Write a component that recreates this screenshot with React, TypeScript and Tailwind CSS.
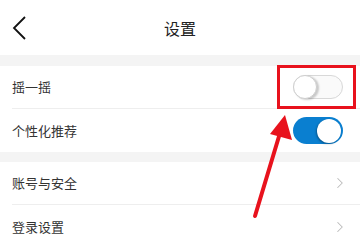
import { ChevronRight } from 'lucide-react';

const font = { fontFamily: '"Noto Sans CJK SC", "Noto Sans", sans-serif' };

function Toggle({ on }: { on: boolean }) {
  if (on) {
    return (
      <div className="relative w-[50px] h-[27px] rounded-full bg-[#0a7fd0] flex items-center justify-end pr-[2px]">
        <div className="w-[24px] h-[24px] rounded-full bg-white shadow-[-1px_1px_2px_rgba(0,0,0,0.3)]" />
      </div>
    );
  }
  return (
    <div className="relative w-[50px] h-[24px] rounded-full border border-[#d8d8d8] bg-[#fafafa] flex items-center">
      <div className="w-[24px] h-[24px] -ml-px rounded-full bg-white border border-[#cfcfcf] shadow-[2px_1px_2px_rgba(0,0,0,0.2)]" />
    </div>
  );
}

function Row({ label, right, divider }: { label: string; right: React.ReactNode; divider?: boolean }) {
  return (
    <div className="bg-white pl-3">
      <div className={`h-[43px] flex items-center justify-between pr-[17px] ${divider ? 'border-b border-[#eeeeee]' : ''}`}>
        <span className="text-[13px] text-[#333]">{label}</span>
        {right}
      </div>
    </div>
  );
}

export default function App() {
  return (
    <div className="relative w-[360px] h-[240px] overflow-hidden bg-[#f4f4f4]" style={font}>
      <div className="h-[55px] bg-white flex items-center relative">
        {/* back */}
        <svg className="ml-[12px]" width="16" height="26" viewBox="0 0 16 26">
          <polyline points="13,2 2,13 13,24" fill="none" stroke="#111" strokeWidth="1.8" />
        </svg>
        <span className="absolute left-0 right-0 text-center text-[16px] text-[#222]">设置</span>
      </div>
      <div className="h-[11px]" />
      <Row label="摇一摇" right={<Toggle on={false} />} divider />
      <Row label="个性化推荐" right={<Toggle on />} />
      <div className="h-[10px]" />
      <Row label="账号与安全" right={<ChevronRight className="-mr-[6px] text-[#bbb]" size={18} strokeWidth={1.4} />} divider />
      <Row label="登录设置" right={<ChevronRight className="-mr-[6px] text-[#bbb]" size={18} strokeWidth={1.4} />} />

      {/* annotation */}
      <div className="absolute left-[277px] top-[65px] w-[79px] h-[44px] border-[3px] border-[#e8121d]" />
      <svg className="absolute left-0 top-0" width="360" height="240">
        <line x1="255" y1="216" x2="280" y2="133" stroke="#e8121d" strokeWidth="4" strokeLinecap="round" />
        <polygon points="285,115 270,134 292,140" fill="#e8121d" />
      </svg>
    </div>
  );
}
